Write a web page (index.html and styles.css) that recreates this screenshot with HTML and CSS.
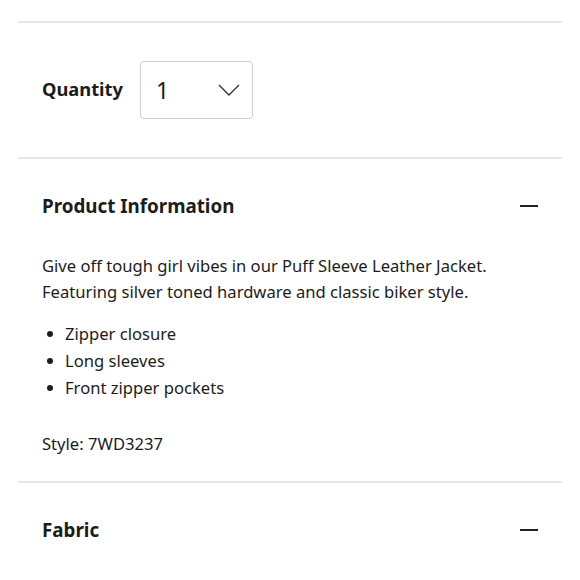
FILE: index.html
```html
<!DOCTYPE html>
<html>
<head>
<meta charset="utf-8">
<link rel="stylesheet" href="styles.css">
</head>
<body>
<div class="page">
  <div class="divider top"></div>
  <div class="qty-row">
    <span class="qty-label">Quantity</span>
    <div class="select">
      <span class="select-value">1</span>
      <svg class="chevron" width="22" height="13" viewBox="0 0 22 13"><path d="M1 1 L11 11 L21 1" fill="none" stroke="#333" stroke-width="1.4"/></svg>
    </div>
  </div>
  <div class="divider"></div>
  <section class="acc">
    <div class="acc-head">
      <h2 class="acc-title">Product Information</h2>
      <span class="minus"></span>
    </div>
    <div class="acc-body">
      <p class="desc">Give off tough girl vibes in our Puff Sleeve Leather Jacket. Featuring silver toned hardware and classic biker style.</p>
      <ul class="bullets">
        <li>Zipper closure</li>
        <li>Long sleeves</li>
        <li>Front zipper pockets</li>
      </ul>
      <p class="style">Style: 7WD3237</p>
    </div>
  </section>
  <div class="divider"></div>
  <section class="acc">
    <div class="acc-head">
      <h2 class="acc-title">Fabric</h2>
      <span class="minus"></span>
    </div>
  </section>
</div>
</body>
</html>
```
FILE: styles.css
```css
* { box-sizing: border-box; }
html, body { margin: 0; padding: 0; background: #fff; }
body {
  font-family: "Noto Sans", "Open Sans", sans-serif;
  color: #1c1c1c;
  width: 580px;
}
.page {
  padding: 0 18px;
}
.divider {
  height: 2px;
  background: #e8e8e8;
}
.divider.top { margin-top: 21px; }
.qty-row {
  display: flex;
  align-items: center;
  padding: 38px 0 38px 24px;
}
.qty-label {
  font-size: 18.3px;
  font-weight: 700;
  margin-right: 17px;
  margin-bottom: 3px;
}
.select {
  width: 113px;
  height: 58px;
  border: 1px solid #cfcfcf;
  border-radius: 4px;
  display: flex;
  align-items: center;
  justify-content: space-between;
  padding: 0 12px 0 15px;
}
.select-value {
  font-size: 23px;
}
.acc-head {
  display: flex;
  align-items: center;
  justify-content: space-between;
  padding: 0 24px;
  height: 94px;
}
.acc-title {
  margin: 0;
  font-size: 18.8px;
  font-weight: 700;
}
.minus {
  width: 18px;
  height: 1.3px;
  background: #222;
}
.acc-body {
  padding: 0 24px 24px;
  font-size: 16.6px;
}
.desc { margin: 0; line-height: 26px; }
.bullets {
  margin: 15px 0 0;
  padding-left: 23px;
  line-height: 27px;
  list-style: none;
}
.bullets li { position: relative; }
.bullets li::before {
  content: "";
  position: absolute;
  left: -18px;
  top: 11px;
  width: 6px;
  height: 6px;
  border-radius: 50%;
  background: #1c1c1c;
}
.style { margin: 29px 0 0; line-height: 27px; }
```
